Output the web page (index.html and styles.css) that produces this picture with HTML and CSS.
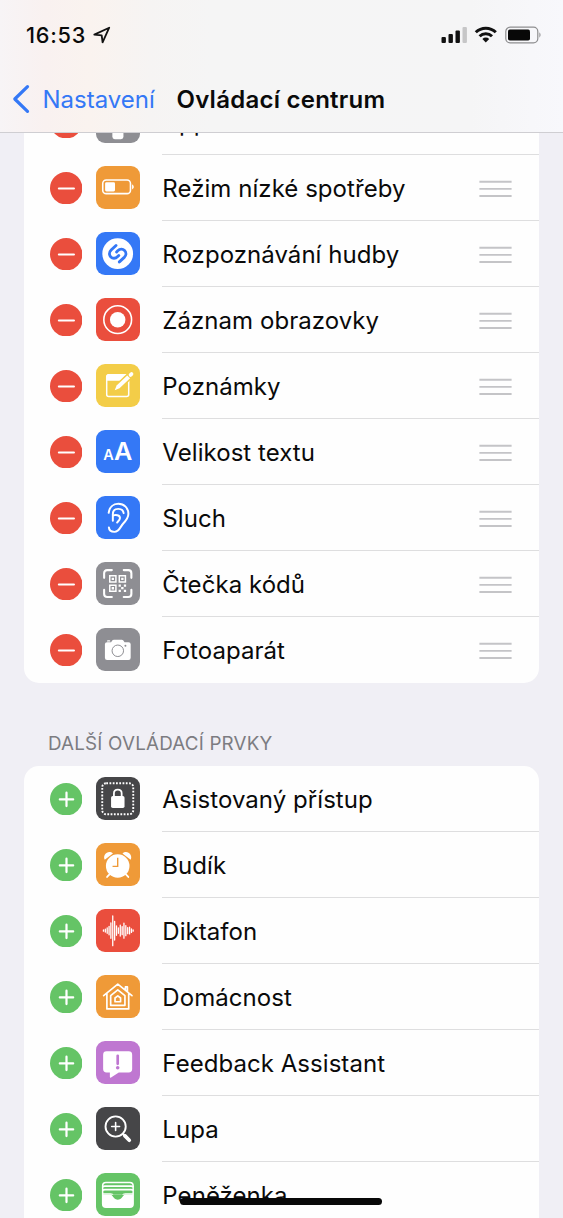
FILE: index.html
```html
<!DOCTYPE html>
<html lang="cs">
<head>
<meta charset="utf-8">
<title>Ovládací centrum</title>
<link rel="stylesheet" href="styles.css">
</head>
<body>
<svg class="defs" width="0" height="0">
  <symbol id="minus" viewBox="0 0 32 32"><circle cx="16" cy="16" r="16" fill="#ea4e3d"/><path d="M8.8 16.3H23.6" stroke="#fff" stroke-width="2.2" stroke-linecap="round"/></symbol>
  <symbol id="plus" viewBox="0 0 32 32"><circle cx="16" cy="16" r="16" fill="#65c466"/><path d="M9.7 16.2H22.9M16.3 9.6V22.8" stroke="#fff" stroke-width="2.2" stroke-linecap="round"/></symbol>
  <symbol id="grip" viewBox="0 0 33 17"><path d="M.4 1.7H32.6M.4 8.9H32.6M.4 16H32.6" stroke="#c4c4c7" stroke-width="1.9"/></symbol>
</svg>
<div class="screen">
  <header class="header">
    <div class="status">
      <span class="time">16:53</span>
      <svg class="location" width="18" height="18" viewBox="0 0 18 18"><path d="M1.3 8.6L16.2 1.7L9.6 16.3L8.7 9.3Z" fill="none" stroke="#111" stroke-width="1.8" stroke-linejoin="round"/></svg>
      <svg class="indicators" width="102" height="18" viewBox="0 0 102 18">
        <g fill="#111"><rect x="1.5" y="11" width="4.4" height="6" rx="1"/><rect x="8.5" y="8" width="4.4" height="9" rx="1"/><rect x="15.5" y="4.5" width="4.4" height="12.5" rx="1"/></g>
        <rect x="22.5" y="1" width="4.4" height="16" rx="1" fill="#c6c6c7"/>
        <g fill="none" stroke="#111" stroke-width="3"><path d="M35.8 6.3a14.2 14.2 0 0 1 20 0"/><path d="M39.6 10.3a8.8 8.8 0 0 1 12.4 0"/></g>
        <path d="M42.4 13a4.8 4.8 0 0 1 6.8 0L45.8 16.6Z" fill="#111"/>
        <rect x="65.8" y="1.2" width="32" height="15.6" rx="4.3" fill="none" stroke="#8e8e90" stroke-width="1.2"/>
        <rect x="68" y="3.6" width="22" height="11" rx="1.8" fill="#080808"/><path d="M99.4 6.3q2.3 2.7 0 5.4Z" fill="#8e8e90"/>
      </svg>
    </div>
    <nav class="nav">
      <svg width="18" height="30" viewBox="0 0 18 30"><path d="M15.5 2.6L2.8 15L15.5 27.3" fill="none" stroke="#3478f6" stroke-width="3.2" stroke-linecap="round" stroke-linejoin="round"/></svg>
      <span class="back">Nastavení</span>
      <h1 class="title">Ovládací centrum</h1>
    </nav>
  </header>
  <main class="content">
    <ul class="card card-included">
      <li class="row"><svg class="toggle"><use href="#minus"/></svg>
        <svg class="icon gray" viewBox="0 0 44 44"><rect x="16.5" y="5" width="11.2" height="34.6" rx="2.5" fill="#fff"/></svg>
        <div class="label"><span>Apple TV Remote</span><svg class="grip"><use href="#grip"/></svg></div></li>
      <li class="row"><svg class="toggle"><use href="#minus"/></svg>
        <svg class="icon orange" viewBox="0 0 44 44"><rect x="6.8" y="14.1" width="28" height="13.8" rx="3.5" fill="none" stroke="#fff" stroke-width="1.6"/><rect x="9.2" y="16.4" width="10" height="9.3" rx="1.4" fill="#fff"/><path d="M36.4 18.3q3.6 2.7 0 5.4Z" fill="#fff"/></svg>
        <div class="label"><span>Režim nízké spotřeby</span><svg class="grip"><use href="#grip"/></svg></div></li>
      <li class="row"><svg class="toggle"><use href="#minus"/></svg>
        <svg class="icon blue" viewBox="0 0 44 44"><circle cx="21.9" cy="21.9" r="15.5" fill="#fff"/><g fill="none" stroke="#3478f6" stroke-width="2.9" stroke-linecap="round"><path d="M20.2 13.6L15.3 18.2C10.5 23 17 29.8 21.9 24.8L23 23.7"/><path d="M23.6 30.2L28.5 25.6C33.3 20.8 26.8 14 21.9 19L20.8 20.1"/></g></svg>
        <div class="label"><span>Rozpoznávání hudby</span><svg class="grip"><use href="#grip"/></svg></div></li>
      <li class="row"><svg class="toggle"><use href="#minus"/></svg>
        <svg class="icon red" viewBox="0 0 44 44"><circle cx="21.9" cy="21.9" r="14" fill="none" stroke="#fff" stroke-width="1.6"/><circle cx="21.9" cy="21.9" r="7.8" fill="#fff"/></svg>
        <div class="label"><span>Záznam obrazovky</span><svg class="grip"><use href="#grip"/></svg></div></li>
      <li class="row"><svg class="toggle"><use href="#minus"/></svg>
        <svg class="icon yellow" viewBox="0 0 44 44"><rect x="10.8" y="11" width="22.2" height="21.7" rx="2" fill="none" stroke="#fff" stroke-width="1.5"/><path d="M10.5 12q0-1.8 2-1.8H31L24.5 17H10.5Z" fill="#fff"/><path d="M20.5 25L34.6 11.3" stroke="#f3cd48" stroke-width="7"/><path d="M18.9 26.6L20.8 21.7L31.5 11.5L34.4 14.4L23.7 24.6Z" fill="#fff"/><path d="M34.9 11L35.8 10.2" stroke="#fff" stroke-width="3.8" stroke-linecap="round"/></svg>
        <div class="label"><span>Poznámky</span><svg class="grip"><use href="#grip"/></svg></div></li>
      <li class="row"><svg class="toggle"><use href="#minus"/></svg>
        <svg class="icon blue" viewBox="0 0 44 44"><g class="aa"><text x="7.3" y="30.4" font-size="14.8" textLength="10.6" lengthAdjust="spacingAndGlyphs">A</text><text x="18.3" y="30.4" font-size="24.7" textLength="18.5" lengthAdjust="spacingAndGlyphs">A</text></g></svg>
        <div class="label"><span>Velikost textu</span><svg class="grip"><use href="#grip"/></svg></div></li>
      <li class="row"><svg class="toggle"><use href="#minus"/></svg>
        <svg class="icon blue" viewBox="0 0 44 44"><g fill="none" stroke="#fff" stroke-width="2" stroke-linecap="round"><path d="M12.8 17C13.5 11.3 17.5 7.8 22.5 7.8C28.5 7.8 32.7 12.3 32.7 18C32.7 22.5 30 25.3 27.3 28C24.5 31 23.5 36.2 18.6 36.2C15 36.2 13.2 34.5 13 31.7"/><path d="M17 25V18.5C17 15 19.3 13 22.5 13C25.4 13 27.4 14.7 27.9 17.3"/><path d="M17.2 19.6C19.8 18.8 24.2 19 24.2 22.2C24.2 24 22.6 25.2 21.3 26.8"/></g></svg>
        <div class="label"><span>Sluch</span><svg class="grip"><use href="#grip"/></svg></div></li>
      <li class="row"><svg class="toggle"><use href="#minus"/></svg>
        <svg class="icon gray" viewBox="0 0 44 44"><path d="M8.2 16V11.3Q8.2 8.2 11.3 8.2H16M28 8.2H32.6Q35.7 8.2 35.7 11.3V16M35.7 28V32.4Q35.7 35.4 32.6 35.4H28M16 35.4H11.3Q8.2 35.4 8.2 32.4V28" fill="none" stroke="#fff" stroke-width="2.1" stroke-linecap="round"/><g fill="none" stroke="#fff" stroke-width="1.5"><path d="M13.9 13.9H20.1V20.1H13.9ZM23.5 13.9H29.7V20.1H23.5ZM13.9 23.4H20.1V29.6H13.9Z"/></g><g fill="#fff"><path d="M15.8 15.8h2.4v2.4h-2.4zM25.4 15.8h2.4v2.4h-2.4zM15.8 25.3h2.4v2.4h-2.4zM25.4 25.2h2.4v2.4h-2.4zM22.8 22.7h2.3v2.3h-2.3zM28.1 22.7h2.3v2.3h-2.3zM22.8 28h2.3v2.3h-2.3zM28.1 28h2.3v2.3h-2.3z"/></g></svg>
        <div class="label"><span>Čtečka kódů</span><svg class="grip"><use href="#grip"/></svg></div></li>
      <li class="row"><svg class="toggle"><use href="#minus"/></svg>
        <svg class="icon gray" viewBox="0 0 44 44"><path d="M9 16.5Q9 14.3 11.2 14.3H15.2L16.6 12.4Q17.1 11.8 18 11.8H26Q26.9 11.8 27.4 12.4L28.8 14.3H32.8Q35 14.3 35 16.5V30Q35 32.2 32.8 32.2H11.2Q9 32.2 9 30ZM11 13.6q0-1.2 1.1-1.2h1.3q1.1 0 1.1 1.2Z" fill="#fff"/><circle cx="22" cy="23" r="5.8" fill="none" stroke="#8e8e93"/><circle cx="29.7" cy="17.8" r="1" fill="#8e8e93"/></svg>
        <div class="label"><span>Fotoaparát</span><svg class="grip"><use href="#grip"/></svg></div></li>
    </ul>
    <h2 class="section">DALŠÍ OVLÁDACÍ PRVKY</h2>
    <ul class="card card-more">
      <li class="row"><svg class="toggle"><use href="#plus"/></svg>
        <svg class="icon dark" viewBox="0 0 44 44"><rect x="6.3" y="6.3" width="31.3" height="31.3" rx="4" fill="none" stroke="#fff" stroke-width="1.9" stroke-dasharray="1.8 1.5"/><rect x="15.2" y="19.2" width="13.6" height="12" rx="1.7" fill="#fff"/><path d="M18.1 20V16.5C18.1 11.6 25.9 11.6 25.9 16.5V20" fill="none" stroke="#fff" stroke-width="1.8"/></svg>
        <div class="label"><span>Asistovaný přístup</span></div></li>
      <li class="row"><svg class="toggle"><use href="#plus"/></svg>
        <svg class="icon orange" viewBox="0 0 44 44"><g fill="#fff"><circle cx="21.9" cy="23.2" r="11.9"/><path d="M8.8 16.8C6.2 11.8 12.5 6.3 17.1 10.5ZM35 16.8C37.6 11.8 31.3 6.3 26.7 10.5Z"/></g><path d="M14.3 31L11.2 34.3M29.5 31L32.6 34.3" stroke="#fff" stroke-width="1.8" stroke-linecap="round"/><path d="M21.9 15V23.6H16.7" fill="none" stroke="#ef9a38" stroke-width="1.4"/></svg>
        <div class="label"><span>Budík</span></div></li>
      <li class="row"><svg class="toggle"><use href="#plus"/></svg>
        <svg class="icon red" viewBox="0 0 44 44"><path d="M7.5 21.2v1.2M9.4 20.4v2.8M11.3 19v5.6M13.2 17.5v8.6M15 14v15.6M16.9 7v30M18.8 12.4v19M20.7 17v9.6M22.6 19v5.6M24.5 16.3v11M26.4 17.7v8.2M28.2 14.2v15.2M30.1 16.7v10.2M32 18.7v6.2M33.9 18.4v6.8M35.8 20v3.6M37.5 21.2v1.2" stroke="#fff" stroke-width="1.3" stroke-linecap="round"/></svg>
        <div class="label"><span>Diktafon</span></div></li>
      <li class="row"><svg class="toggle"><use href="#plus"/></svg>
        <svg class="icon orange" viewBox="0 0 44 44"><g fill="none" stroke="#fff" stroke-width="1.7" stroke-linejoin="round" stroke-linecap="round"><path d="M7.7 20.8L22 9.2L36.3 20.8M29.7 15.5V12H31.7V17M11 18.5V34.2H33V18.5"/><path d="M14.8 20.9L22 15L29.2 20.9V30.6H14.8Z"/><path d="M19.2 23.2L22 21L24.8 23.2V27H19.2Z"/></g></svg>
        <div class="label"><span>Domácnost</span></div></li>
      <li class="row"><svg class="toggle"><use href="#plus"/></svg>
        <svg class="icon purple" viewBox="0 0 44 44"><path d="M10.7 10.3H33Q36.5 10.3 36.5 13.8V28.3Q36.5 31.8 33 31.8H23L15.2 36.8Q14 37.4 14 36V31.8H10.7Q7.2 31.8 7.2 28.3V13.8Q7.2 10.3 10.7 10.3Z" fill="#fff"/><path d="M21.9 15V23" stroke="#bf77d1" stroke-width="2.7" stroke-linecap="round"/><circle cx="21.9" cy="27" r="1.8" fill="#bf77d1"/></svg>
        <div class="label"><span>Feedback Assistant</span></div></li>
      <li class="row"><svg class="toggle"><use href="#plus"/></svg>
        <svg class="icon dark" viewBox="0 0 44 44"><g fill="none" stroke="#fff" stroke-linecap="round"><circle cx="19.8" cy="19.7" r="10.2" stroke-width="1.9"/><path d="M15.8 19.7H23.8M19.8 15.7V23.7" stroke-width="1.6"/><path d="M27.3 27.2L29 28.9" stroke-width="2"/><path d="M29 28.9L33.6 33.5" stroke-width="3.7"/></g></svg>
        <div class="label"><span>Lupa</span></div></li>
      <li class="row"><svg class="toggle"><use href="#plus"/></svg>
        <svg class="icon green" viewBox="0 0 44 44"><rect x="6.7" y="9.6" width="30.8" height="24.9" rx="3.3" fill="none" stroke="#fff" stroke-width="1.5"/><path d="M6.5 14.1Q7.5 13.2 9 13.2H35.2Q36.8 13.2 37.8 14.1M6.5 17.6Q7.5 16.8 9 16.8H35.2Q36.8 16.8 37.8 17.6" fill="none" stroke="#fff" stroke-width="1.7"/><path d="M6.8 20.4H14.6Q17.2 20.4 18.4 22.2H25.8Q27 20.4 29.6 20.4H37.4V22H6.8Z" fill="#fff"/><path d="M6.8 22H14.3C16.5 22 17 24 18.2 25.3C20.5 27.6 23.5 27.6 25.8 25.3C27 24 27.5 22 29.7 22H37.4V31.5Q37.4 34.4 34.4 34.4H9.8Q6.8 34.4 6.8 31.5Z" fill="#fff"/></svg>
        <div class="label"><span>Peněženka</span></div></li>
    </ul>
  </main>
  <div class="home-indicator"></div>
</div>
</body>
</html>
```
FILE: styles.css
```css
* { box-sizing: border-box; }
body {
  margin: 0;
  background: #f0eff5;
  color: #0a0a0a;
  font-family: Inter, "Liberation Sans", sans-serif;
}
.defs { display: block; }
.screen {
  position: relative;
  display: flex;
  flex-direction: column;
  width: 563px;
  height: 1218px;
  overflow: hidden;
}
.header {
  flex: none;
  height: 133px;
  border-bottom: 1px solid #cfced2;
  background: linear-gradient(90deg, #f7f4f6 0, #f9f1f0 45px, #faf3ef 90px, #f6f4f3 150px, #f5f5f5 210px, #f5f5f6 470px, #f8f8fc 563px);
}
.status {
  display: flex;
  align-items: center;
  height: 69px;
  padding: 0 21px 0 26px;
}
.time {
  width: 67px;
  font-size: 21.7px;
  font-weight: 500;
  letter-spacing: 0.75px;
}
.indicators { margin-left: auto; }
.nav {
  display: flex;
  align-items: center;
  height: 60px;
  padding-left: 12px;
}
.back {
  width: 134px;
  padding-left: 12.5px;
  color: #3478f6;
  font-size: 24px;
  letter-spacing: 0;
}
.title {
  margin: 0 0 0 12.5px;
  font-size: 24px;
  font-weight: 600;
  letter-spacing: 0.25px;
  white-space: nowrap;
}
.content {
  flex: 1;
  min-height: 0;
  overflow: hidden;
  padding: 0 24px;
}
.card {
  margin: 0;
  padding: 0;
  list-style: none;
  background: #fefefe;
  border-radius: 15px;
}
.card-included { margin-top: -44px; }
.card-more { border-radius: 15px 15px 0 0; }
.row {
  display: flex;
  align-items: center;
  height: 66px;
  padding-left: 26px;
}
.toggle { flex: none; width: 32.4px; height: 32.4px; }
.icon {
  flex: none;
  width: 43.6px;
  height: 43.6px;
  margin: -1px 22.4px 0 13.6px;
  border-radius: 9px;
}
.gray { background: #8e8e93; }
.orange { background: #ef9a38; }
.blue { background: #3478f6; }
.red { background: #ea4e3d; }
.yellow { background: #f3cd48; }
.dark { background: #464648; }
.purple { background: #bf77d1; }
.green { background: #65c466; }
.aa { fill: #fff; font-weight: 600; }
.label {
  flex: 1;
  display: flex;
  align-items: center;
  justify-content: space-between;
  height: 66px;
  padding: 2px 27px 0 0.4px;
  border-bottom: 1px solid #dededf;
  font-size: 24px;
  letter-spacing: 0.05px;
  white-space: nowrap;
}
.row:last-child .label { border-bottom-color: transparent; }
.grip { width: 33px; height: 17px; }
.section {
  height: 83px;
  margin: 0;
  padding: 49px 0 0 24px;
  color: #7c7c81;
  font-size: 18.8px;
  font-weight: 400;
  line-height: 24px;
  letter-spacing: 0.2px;
}
.home-indicator {
  position: absolute;
  left: 180px;
  bottom: 13px;
  width: 202px;
  height: 7px;
  border-radius: 4px;
  background: #080808;
}
```
